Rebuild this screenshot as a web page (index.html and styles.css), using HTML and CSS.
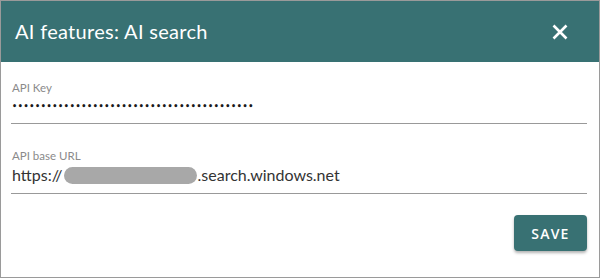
FILE: index.html
```html
<!DOCTYPE html>
<html lang="en">
<head>
<meta charset="utf-8">
<title>AI features: AI search</title>
<link rel="stylesheet" href="styles.css">
</head>
<body>
<div class="dialog">
  <div class="header">
    <div class="title">AI features: AI search</div>
    <button class="close" aria-label="Close">
      <svg width="16" height="16" viewBox="0 0 16 16"><path d="M1.5 1.5 L14.5 14.5 M14.5 1.5 L1.5 14.5" stroke="#fff" stroke-width="2.6" stroke-linecap="butt"/></svg>
    </button>
  </div>
  <div class="content">
    <div class="field field-key">
      <div class="label">API Key</div>
      <div class="value dots">••••••••••••••••••••••••••••••••••••••••••</div>
    </div>
    <div class="field field-url">
      <div class="label">API base URL</div>
      <div class="value url">https://<span class="blur"></span>.search.windows.net</div>
    </div>
    <div class="actions">
      <button class="save">SAVE</button>
    </div>
  </div>
</div>
</body>
</html>
```
FILE: styles.css
```css
html, body {
  margin: 0;
  padding: 0;
  background: #fff;
}
.dialog {
  width: 600px;
  height: 278px;
  box-sizing: border-box;
  border: 1px solid #9a9a9a;
  display: flex;
  flex-direction: column;
  font-family: Lato, "Open Sans", sans-serif;
}
.header {
  height: 61px;
  background: #387173;
  display: flex;
  align-items: center;
  justify-content: space-between;
  padding: 0 31px 0 14px;
}
.title {
  color: #fff;
  font-size: 20px;
  font-weight: 400;
  letter-spacing: 0.3px;
  padding-bottom: 2px;
}
.close {
  border: 0;
  background: none;
  padding: 0;
  width: 16px;
  height: 16px;
  display: flex;
}
.content {
  padding: 0 12px 0 10px;
  display: flex;
  flex-direction: column;
}
.field {
  border-bottom: 1px solid #999;
}
.field-key {
  margin-top: 19px;
  height: 42px;
}
.field-url {
  margin-top: 25px;
  height: 44px;
}
.label {
  font-size: 11.5px;
  color: #8a8a8a;
  line-height: 14px;
  padding-left: 1px;
}
.dots {
  font-family: "DejaVu Sans", sans-serif;
  font-size: 8px;
  font-weight: bold;
  letter-spacing: 0.65px;
  color: #1a1a1a;
  margin-top: 6px;
  line-height: 12px;
  padding-left: 1px;
}
.url {
  font-size: 16px;
  color: #333;
  margin-top: 1px;
  line-height: 22px;
  display: flex;
  align-items: center;
  padding-left: 1px;
}
.blur {
  display: inline-block;
  width: 133px;
  height: 17px;
  background: #a8a8a8;
  border-radius: 9px;
  margin: 0 1px 0 1px;
  filter: blur(0.6px);
}
.actions {
  display: flex;
  justify-content: flex-end;
  margin-top: 21px;
  padding-right: 0;
}
.save {
  width: 73px;
  height: 36px;
  background: #387173;
  color: #fff;
  border: 0;
  border-radius: 4px;
  font-family: "Open Sans", sans-serif;
  font-size: 14px;
  font-weight: 600;
  letter-spacing: 1.2px;
  box-shadow: 0 2px 3px rgba(0,0,0,0.3);
  padding: 0;
}
```
